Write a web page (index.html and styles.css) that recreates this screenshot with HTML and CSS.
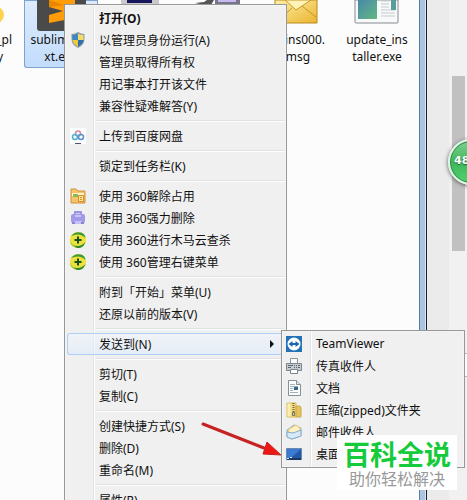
FILE: index.html
```html
<!DOCTYPE html>
<html lang="zh-CN">
<head>
    <meta charset="UTF-8">
    <meta name="viewport" content="width=device-width, initial-scale=1.0">
    <title>发送到</title>
    <link rel="stylesheet" href="styles.css">
</head>
<body>
    <div class="desktop">
        <main class="explorer">
            <div class="files">
                <div class="file">
                    <svg class="file-icon" viewBox="0 0 74 31">
                        <circle cx="51" cy="15" r="8" fill="#fbd34c"/>
                        <circle cx="49" cy="13" r="4" fill="#fde88e"/>
                    </svg>
                    <span class="line line-wide">_pl</span>
                    <span class="line line-narrow">y</span>
                </div>
                <div class="file selected">
                    <svg class="file-icon" viewBox="0 0 74 31">
                        <path d="M13 0h49v28q0 3-3 3H16q-3 0-3-3z" fill="#4a4a4a"/>
                        <path d="M25 0h26v9l-11 3 11 4v2l-26 5v-8l14-4-14-4z" fill="#ff9c0a"/>
                        <path d="M25 0l15 5-15 2z" fill="#e88600"/>
                    </svg>
                    <span class="line">sublime_te</span>
                    <span class="line">xt.exe</span>
                </div>
                <div class="file">
                    <svg class="file-icon" viewBox="0 0 74 31">
                        <path d="M18 0h38v5H18z" fill="#c9c9c9"/>
                        <path d="M24 0h25v3H24z" fill="#16165c"/>
                    </svg>
                </div>
                <div class="file">
                    <svg class="file-icon" viewBox="0 0 74 31">
                        <path d="M13 3l9-1 3-2h7l-3 5h-7z" fill="#555"/>
                        <path d="M33 0h25v5H33z" fill="#77758c"/>
                        <path d="M36 0h18v2H36z" fill="#c8b8ee"/>
                    </svg>
                </div>
                <div class="file">
                    <svg class="file-icon" viewBox="0 0 74 31">
                        <defs>
                            <linearGradient id="mail" x1="0" y1="0" x2="1" y2="1">
                                <stop offset="0" stop-color="#fff0a8"/>
                                <stop offset="1" stop-color="#eab42e"/>
                            </linearGradient>
                        </defs>
                        <path d="M14 0h42v23H14z" fill="url(#mail)" stroke="#b98a1c"/>
                        <path d="M16 22l15-14M55 17L41 6" stroke="#c8962a" fill="none"/>
                        <path d="M24 0l11 10L50 0z" fill="#fff3b8" stroke="#c8962a"/>
                    </svg>
                    <span class="line line-mid">ins000.</span>
                    <span class="line">msg</span>
                </div>
                <div class="file">
                    <svg class="file-icon" viewBox="0 0 74 31">
                        <defs>
                            <linearGradient id="shot" x1="0" y1="0" x2="1" y2="1">
                                <stop offset="0" stop-color="#4a87a8"/>
                                <stop offset="1" stop-color="#62b884"/>
                            </linearGradient>
                        </defs>
                        <path d="M15 0h43v22q0 1-1 1H16q-1 0-1-1z" fill="#f8fafa" stroke="#858b91"/>
                        <path d="M18 0h19v19H18z" fill="url(#shot)"/>
                        <path d="M41 1h8M41 4h8M41 7h8M41 10h14M41 13h14M41 16h14" stroke="#c5c9cc"/>
                        <path d="M51 0h5v10h-5z" fill="#579f98"/>
                    </svg>
                    <span class="line">update_ins</span>
                    <span class="line">taller.exe</span>
                </div>
            </div>
        </main>
        <aside class="side">
            <div class="track">
                <div class="thumb"></div>
                <div class="box"></div>
            </div>
        </aside>

        <div class="ball">48</div>

        <div class="menu context-menu">
            <button class="item bold">打开(O)</button>
            <button class="item">
                <svg class="icon" viewBox="0 0 16 16">
                    <path d="M8 0q3 2 6.500 2v5q0 6-6.500 9Q1.500 13 1.500 7V2Q5 2 8 0z" fill="#8a9aa5"/>
                    <path d="M8 1.500V8H2.500V3Q6 3 8 1.500z" fill="#3f87c2"/>
                    <path d="M8 1.500V8h5.500V3Q10 3 8 1.500z" fill="#f5dc68"/>
                    <path d="M2.500 8H8v6.800Q3 12 2.500 8z" fill="#f1ca3c"/>
                    <path d="M13.500 8H8v6.800Q13 12 13.500 8z" fill="#2f6fae"/>
                </svg>
                以管理员身份运行(A)
            </button>
            <button class="item">管理员取得所有权</button>
            <button class="item">用记事本打开该文件</button>
            <button class="item">兼容性疑难解答(Y)</button>
            <hr>
            <button class="item">
                <svg class="icon" viewBox="0 0 16 16">
                    <path d="M0 0h16v16H0z" fill="#fbfdfe"/>
                    <g fill="none" stroke-width="1.500">
                        <circle cx="8" cy="5.500" r="2.500" stroke="#d88a9c"/>
                        <circle cx="5" cy="9" r="2.500" stroke="#4fb4cf"/>
                        <circle cx="11" cy="9" r="2.500" stroke="#5b93d0"/>
                    </g>
                    <path d="M5 15.500h6" stroke="#4d5963"/>
                </svg>
                上传到百度网盘
            </button>
            <hr>
            <button class="item">锁定到任务栏(K)</button>
            <hr>
            <button class="item">
                <svg class="icon" viewBox="0 0 16 16">
                    <path d="M1 1h5l2 2h7v12H1z" fill="#f6c468" stroke="#d0913a"/>
                    <path d="M2 5h12v3H2z" fill="#fff4cd"/>
                    <path d="M3 6h5v3H3z" fill="#8cba58"/>
                    <path d="M8.500 7.500h5v6h-5z" fill="#fce7a4" stroke="#d88f24"/>
                    <path d="M10 9.500h2M10 11.500h2" stroke="#d88f24"/>
                </svg>
                使用 360解除占用
            </button>
            <button class="item">
                <svg class="icon" viewBox="0 0 16 16">
                    <path d="M4 1h8v5H4z" fill="#9b95e4"/>
                    <path d="M6 3h4v2H6z" fill="#d5d2fa"/>
                    <rect x="1" y="4" width="14" height="9" rx="2" fill="#a19ae6"/>
                    <path d="M5 5h6v2H5z" fill="#c8c4f8"/>
                    <path d="M4 11h8v3H4z" fill="#c4c0f6"/>
                    <path d="M2 12h3v2H2zM11 12h3v2h-3z" fill="#8d85d4"/>
                </svg>
                使用 360强力删除
            </button>
            <button class="item">
                <svg class="icon" viewBox="0 0 16 16">
                    <circle cx="8" cy="8" r="8" fill="#ece23b"/>
                    <path d="M1 4Q5-1 11 .6 15 2 15.500 6 10 0 1 4z" fill="#3f9a36"/>
                    <path d="M0 8q0 8 9 8-7-2-9-8z" fill="#a9cc2f"/>
                    <path d="M3 13q7 3 12.500-3Q13 17 7 16z" fill="#2f8a31"/>
                    <path d="M8 4.500v7M4.500 8h7" stroke="#17501f" stroke-width="2"/>
                </svg>
                使用 360进行木马云查杀
            </button>
            <button class="item">
                <svg class="icon" viewBox="0 0 16 16">
                    <circle cx="8" cy="8" r="8" fill="#ece23b"/>
                    <path d="M1 4Q5-1 11 .6 15 2 15.500 6 10 0 1 4z" fill="#3f9a36"/>
                    <path d="M0 8q0 8 9 8-7-2-9-8z" fill="#a9cc2f"/>
                    <path d="M3 13q7 3 12.500-3Q13 17 7 16z" fill="#2f8a31"/>
                    <path d="M8 4.500v7M4.500 8h7" stroke="#17501f" stroke-width="2"/>
                </svg>
                使用 360管理右键菜单
            </button>
            <hr>
            <button class="item">附到「开始」菜单(U)</button>
            <button class="item">还原以前的版本(V)</button>
            <hr>
            <button class="item active" aria-haspopup="menu" aria-expanded="true">
                发送到(N)
                <svg class="caret" viewBox="0 0 4 8"><path d="M0 0l4 4-4 4z" fill="#111"/></svg>
            </button>
            <hr>
            <button class="item">剪切(T)</button>
            <button class="item">复制(C)</button>
            <hr>
            <button class="item">创建快捷方式(S)</button>
            <button class="item">删除(D)</button>
            <button class="item">重命名(M)</button>
            <hr>
            <button class="item">属性(R)</button>
        </div>

        <div class="menu submenu">
            <button class="item">
                <svg class="icon" viewBox="0 0 16 16">
                    <path d="M0 0h16v16H0z" fill="#2272b8"/>
                    <circle cx="8" cy="8" r="6.500" fill="#fff"/>
                    <path d="M2.500 8l4-3v2h3V5l4 3-4 3V9h-3v2z" fill="#1b66ac"/>
                </svg>
                TeamViewer
            </button>
            <button class="item">
                <svg class="icon" viewBox="0 0 16 16">
                    <path d="M4.500.5h7v5h-7z" fill="#fafcfd" stroke="#8b959c"/>
                    <path d="M.5 5.500h15v7H.5z" fill="#c4ccd2" stroke="#7d878f"/>
                    <path d="M2 7.500h5M8 7.500h1M10 7.500h1M12 7.500h2M2 9.500h3M8 9.500h1M10 9.500h1M12 9.500h2" stroke="#59666f"/>
                    <path d="M4.500 11.500h7v4h-7z" fill="#fff" stroke="#7c868d"/>
                </svg>
                传真收件人
            </button>
            <button class="item">
                <svg class="icon" viewBox="0 0 16 16">
                    <path d="M2.500.5h8l4 4v11h-12z" fill="#fcfdfd" stroke="#859099"/>
                    <path d="M10.500.5v4h4" fill="#dce4e9" stroke="#859099"/>
                    <path d="M4 4.500h5M4 6.500h8M4 8.500h3M4 10.500h3M4 12.500h8" stroke="#a3afb9"/>
                    <path d="M8 7h4v3H8z" fill="#37658a"/>
                </svg>
                文档
            </button>
            <button class="item">
                <svg class="icon" viewBox="0 0 16 16">
                    <path d="M1 1h9v14H1z" fill="#f4dc7c" stroke="#d8bc62"/>
                    <path d="M10 4h4l1 2v9h-5z" fill="#e6c357" stroke="#c9a84e"/>
                    <path d="M1.500 1.500h3v13h-3z" fill="#fbeeb0"/>
                    <path d="M7.500 1v10" stroke="#766942" stroke-width="2" stroke-dasharray="1 1"/>
                    <path d="M6.500 10.500h2v3h-2z" fill="#d4d4cc" stroke="#77735e"/>
                </svg>
                压缩(zipped)文件夹
            </button>
            <button class="item">
                <svg class="icon" viewBox="0 0 16 16">
                    <path d="M1 6l7-5 7 3v8l-9 3-5-2z" fill="#a5cbe8" stroke="#8fb0c8"/>
                    <path d="M3 5l7-4 4 3v4l-8 3-4-3z" fill="#fff1c0" stroke="#e3c67a"/>
                    <path d="M1 8l6 1 8-3v6l-9 3-5-2z" fill="#d5e9f8" stroke="#86acc9"/>
                </svg>
                邮件收件人
            </button>
            <button class="item">
                <svg class="icon" viewBox="0 0 16 16">
                    <path d="M.5 2.500h15v11H.5z" fill="#2458a9" stroke="#6889a9"/>
                    <path d="M1 3h14L5 12H1z" fill="#3b7ad0"/>
                    <path d="M1 12h14v2H1z" fill="#1c3764"/>
                    <path d="M1 12h2v1H1zM4 11h2v1H4z" fill="#d9edf9"/>
                </svg>
                桌面
            </button>
        </div>

        <svg class="arrow" viewBox="0 0 82 36">
            <path d="M3 2L64 26" stroke="#c62222" stroke-width="3" stroke-linecap="round"/>
            <path d="M67 20l14 13-18-1z" fill="#ee1515" stroke="#c62222"/>
        </svg>

        <div class="badge">
            <strong>百科全说</strong>
            <span>助你轻松解决</span>
        </div>
    </div>
</body>
</html>
```

FILE: styles.css
```css
* {
    box-sizing: border-box;
}
body {
    margin: 0;
    font-family: "Noto Sans", "Noto Sans CJK SC", sans-serif;
    font-size: 12px;
    color: #111;
}
.desktop {
    position: relative;
    display: flex;
    height: 100vh;
    overflow: hidden;
    background: #ebebeb;
}

/* file window */
.explorer {
    flex: 1;
    min-width: 0;
    overflow: hidden;
    background: #fcfcfc;
    border-right: 1px solid #16202a;
    box-shadow: inset -1px 0 #dce9f5, inset -6px 0 #abc5e1, inset -7px 0 #5580a6;
}
.files {
    display: flex;
    gap: 5px;
    margin-left: -55px;
}
.file {
    flex: none;
    width: 74px;
    height: 68px;
    text-align: center;
    line-height: 17px;
}
.file.selected {
    background: linear-gradient(#dcebfd, #c2dcfc);
    box-shadow: inset 0 0 0 1px #7da2ce;
    border-radius: 0 0 3px 3px;
}
.file-icon {
    display: block;
    width: 74px;
    height: 31px;
}
.line {
    display: block;
    margin: 0 auto;
}
.line-wide,
.line-mid,
.line-narrow {
    text-align: right;
}
.line-wide {
    width: 60px;
}
.line-mid {
    width: 54px;
}
.line-narrow {
    width: 42px;
}

/* page scrollbar on the right */
.side {
    display: flex;
    justify-content: flex-end;
    width: 40px;
}
.track {
    display: flex;
    flex-direction: column;
    width: 18px;
    padding-top: 76px;
    background: #f1f1f1;
}
.thumb {
    width: 13px;
    height: 175px;
    margin-left: 3px;
    background: #c1c1c1;
}
.box {
    height: 24px;
    margin-top: 102px;
    background: #fff;
    border: 1px solid #b5b5b5;
    border-width: 1px 0;
}
.ball {
    position: absolute;
    top: 139px;
    right: -27px;
    width: 46px;
    height: 46px;
    padding-left: 4px;
    border: 2px solid #dff5e4;
    border-radius: 50%;
    background: linear-gradient(#7ed092, #3fb65b 50%, #52d36e);
    box-shadow: inset 0 0 0 1px #2b8a41, 0 1px 4px #555;
    color: #fff;
    font: bold 11px/40px "DejaVu Sans", sans-serif;
    text-shadow: 0 1px 1px #1c6b30;
}

/* menus */
.menu {
    position: absolute;
    padding: 2px;
    border: 1px solid #979797;
    background: linear-gradient(90deg, transparent 28px, #e1e3e6 28px, #e1e3e6 29px, #fff 29px, #fff 30px, transparent 30px) #f0f0f0;
    box-shadow: inset 0 0 0 1px #f5f5f5;
}
.context-menu {
    top: 4px;
    left: 64px;
    width: 223px;
}
.submenu {
    top: 330px;
    left: 281px;
    width: 184px;
}
.item {
    display: flex;
    align-items: center;
    position: relative;
    width: 100%;
    height: 22px;
    padding: 0 10px 1px 32px;
    border: 0;
    border-radius: 3px;
    background: none;
    color: inherit;
    font: inherit;
    text-align: left;
    white-space: nowrap;
}
.item:hover,
.item.active {
    background: linear-gradient(rgba(240, 246, 253, 0.6), rgba(222, 234, 250, 0.6));
    box-shadow: inset 0 0 0 1px #aecff7;
}
.bold {
    font-weight: bold;
}
.icon {
    width: 16px;
    height: 16px;
    margin: 0 13px 0 -29px;
}
.submenu .icon {
    margin: 0 14px 0 -30px;
}
.caret {
    width: 4px;
    height: 8px;
    margin-left: auto;
}
.menu hr {
    height: 2px;
    margin: 3px 0 3px 29px;
    border: 0;
    border-top: 1px solid #e0e0e0;
    background: #fff;
}

.arrow {
    position: absolute;
    top: 422px;
    left: 200px;
    width: 82px;
    height: 36px;
}
.badge {
    position: absolute;
    top: 435px;
    left: 337px;
    display: flex;
    flex-direction: column;
    align-items: center;
    padding: 4px 6px 2px;
    background: #fff;
    font-family: "Noto Sans CJK SC", sans-serif;
}
.badge strong {
    color: #15cb3b;
    font-size: 27px;
    line-height: 30px;
}
.badge span {
    color: #999;
    font-size: 16px;
    line-height: 19px;
}
```
